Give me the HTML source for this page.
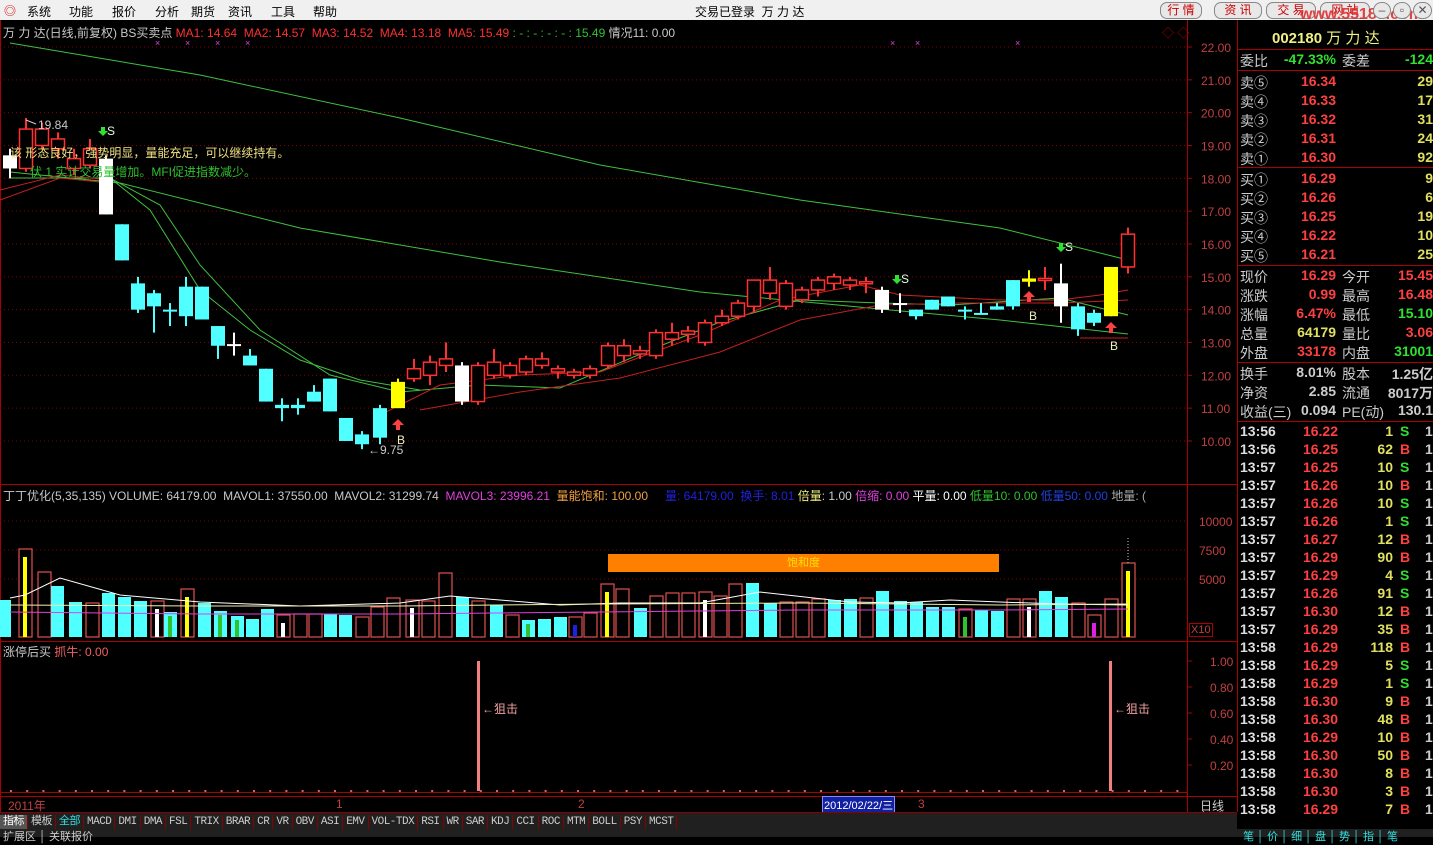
<!DOCTYPE html>
<html><head><meta charset="utf-8">
<style>
*{margin:0;padding:0;box-sizing:border-box}
body{width:1433px;height:837px;background:#000;overflow:hidden;position:relative;font-family:"Liberation Sans","Noto Sans CJK SC",sans-serif;font-size:12px}
.menu{position:absolute;left:0;top:0;width:1433px;height:20px;background:#f0f0f0;color:#000;font-size:12px}
.menu span{position:absolute;top:3px}
.btn{position:absolute;top:2px;height:17px;border:1px solid #888;border-radius:7px;background:#e8e8e8;color:#c00;font-size:12px;text-align:center;line-height:15px}
.t{position:absolute;white-space:nowrap}
.rp{position:absolute;left:1237px;top:20px;width:196px;height:792px;background:#000;font-size:14px;font-weight:bold}
.rp .l{position:absolute;left:3px;color:#c8c8c8;font-weight:normal}
.hl{position:absolute;left:0;width:196px;height:1px;background:#a00}
.tabs{position:absolute;left:0;top:812px;width:1237px;height:17px;background:#202020;border-top:1px solid #800}
.tabs span{display:inline-block;height:16px;line-height:15px;padding:0 3px;border-right:1px solid #800;color:#ccc;font-family:"Liberation Mono","Noto Sans CJK SC",monospace;font-size:11px;letter-spacing:-0.5px}
</style></head><body>
<div class="menu">
<span style="left:4px;top:2px;color:#d02020;font-weight:bold">◎</span>
<span style="left:27px">系统</span><span style="left:69px">功能</span><span style="left:112px">报价</span><span style="left:155px">分析</span><span style="left:191px">期货</span><span style="left:228px">资讯</span><span style="left:271px">工具</span><span style="left:313px">帮助</span>
<span style="left:695px">交易已登录&nbsp; 万 力 达</span>
</div>
<div class="btn" style="left:1160px;width:42px">行 情</div>
<div class="btn" style="left:1214px;width:48px">资 讯</div>
<div class="btn" style="left:1266px;width:50px">交 易</div>
<div class="btn" style="left:1320px;width:50px">网 站</div>
<div class="t" style="left:1300px;top:6px;color:#e03030;font-weight:bold;font-size:16px;opacity:.9">www.55188.com</div>
<div class="btn" style="left:1373px;width:18px;border-radius:9px;color:#555">–</div>
<div class="btn" style="left:1393px;width:18px;border-radius:9px;color:#555">▫</div>
<div class="btn" style="left:1413px;width:19px;border-radius:9px;color:#555">✕</div>

<svg id="ch" width="1237" height="792" style="position:absolute;left:0;top:20px" xmlns="http://www.w3.org/2000/svg"></svg>

<div class="t" style="left:3px;top:24px;color:#c8c8c8">万 力 达(日线,前复权) BS买卖点 <span style="color:#ff3030">MA1: 14.64&nbsp; MA2: 14.57&nbsp; MA3: 14.52&nbsp; MA4: 13.18&nbsp; MA5: 15.49</span> <span style="color:#30c030">: - : - : - : - : 15.49</span> 情况11: 0.00</div>
<div class="t" style="left:1162px;top:24px;color:#a00">◇ ◇</div>
<div class="t" style="left:10px;top:144px;color:#f0e080;font-size:12px">该 形态良好，强势明显，量能充足，可以继续持有。</div>
<div class="t" style="left:30px;top:163px;color:#30c030;font-size:12px">伏 1 实计交易量增加。MFI促进指数减少。</div>
<div class="t" style="left:38px;top:118px;color:#c8c8c8">19.84</div>
<div class="t" style="left:368px;top:443px;color:#c8c8c8">←9.75</div>

<div class="t" style="left:3px;top:487px;color:#c8c8c8">丁丁优化(5,35,135) VOLUME: 64179.00&nbsp; MAVOL1: 37550.00&nbsp; MAVOL2: 31299.74&nbsp; <span style="color:#e040e0">MAVOL3: 23996.21</span>&nbsp; <span style="color:#f0a040">量能饱和: 100.00</span></div>
<div class="t" style="left:665px;top:487px;color:#2020e0">量: 64179.00&nbsp; 换手: 8.01 <span style="color:#f0f080">倍量</span><span style="color:#ccc">: 1.00</span> <span style="color:#e040e0">倍缩: 0.00</span> <span style="color:#fff">平量: 0.00</span> <span style="color:#30c030">低量10: 0.00</span> <span style="color:#2040e0">低量50: 0.00</span> <span style="color:#aaa">地量: (</span></div>
<div class="t" style="left:608px;top:554px;width:391px;height:18px;background:#ff8000;color:#ffe000;text-align:center;line-height:18px;font-size:11px">饱和度</div>
<div class="t" style="left:1189px;top:623px;border:1px solid #a00;color:#c04040;font-size:11px;padding:0 1px">X10</div>
<div class="t" style="left:3px;top:643px;color:#c8c8c8">涨停后买 <span style="color:#f06060">抓牛: 0.00</span></div>
<div class="t" style="left:482px;top:700px;color:#f0a0a0">←狙击</div>
<div class="t" style="left:1114px;top:700px;color:#f0a0a0">←狙击</div>
<div class="t" style="left:8px;top:797px;color:#c04040">2011年</div>
<div class="t" style="left:336px;top:797px;color:#c04040">1</div>
<div class="t" style="left:578px;top:797px;color:#c04040">2</div>
<div class="t" style="left:822px;top:796px;background:#1020a0;color:#fff;border:1px solid #88f;padding:0 1px;font-size:11px">2012/02/22/三</div>
<div class="t" style="left:918px;top:797px;color:#c04040">3</div>
<div class="t" style="left:1200px;top:797px;color:#ccc">日线</div>
<div class="t" style="left:1188px;top:812px;width:49px;height:17px;color:#ccc;font-size:11px;background:#202020">&nbsp;+ │ - │ 0</div>

<div class="tabs"><span style="background:#555;color:#fff">指标</span><span>模板</span><span style="color:#30e0e0">全部</span><span>MACD</span><span>DMI</span><span>DMA</span><span>FSL</span><span>TRIX</span><span>BRAR</span><span>CR</span><span>VR</span><span>OBV</span><span>ASI</span><span>EMV</span><span>VOL-TDX</span><span>RSI</span><span>WR</span><span>SAR</span><span>KDJ</span><span>CCI</span><span>ROC</span><span>MTM</span><span>BOLL</span><span>PSY</span><span>MCST</span></div>
<div class="t" style="left:0;top:829px;width:1237px;height:8px;background:#202020;color:#ccc;font-size:11px;line-height:16px">&nbsp;扩展区 │ 关联报价</div>

<div class="rp" id="rp">
<div class="hl" style="top:0;background:#a00;width:1px;height:792px"></div>
<div class="t" style="left:35px;top:7px;color:#f0f080;font-size:15px">002180 <span style="font-weight:normal">万 力 达</span></div>
<div class="hl" style="top:29px"></div>
<div class="hl" style="top:50px"></div>
<div class="hl" style="top:147px"></div>
<div class="hl" style="top:245px"></div>
<div class="hl" style="top:342px"></div>
<div class="hl" style="top:401px"></div>
</div>
<div class="t" style="left:1237px;top:829px;width:196px;height:8px;background:#202020;color:#30e0e0;font-size:11px;line-height:16px">&nbsp;&nbsp;笔 │ 价 │ 细 │ 盘 │ 势 │ 指 │ 笔</div>

<script>
const S='http://www.w3.org/2000/svg';const svg=document.getElementById('ch');
function el(n,a){const e=document.createElementNS(S,n);for(const k in a)e.setAttribute(k,a[k]);svg.appendChild(e);return e}
function tx(x,y,s,c,fs){const e=el('text',{x:x,y:y,fill:c,'font-size':fs||12,'font-family':'Liberation Sans, Noto Sans CJK SC, sans-serif'});e.textContent=s;return e}
const O=20; // svg offset
function Y(p){return 47+(22-p)*32.83-O}
// frames
el('line',{x1:1187.5,y1:0,x2:1187.5,y2:792,stroke:'#a00'});
el('line',{x1:0,y1:464.5,x2:1237,y2:464.5,stroke:'#a00'});
el('line',{x1:0,y1:621.5,x2:1237,y2:621.5,stroke:'#a00'});
el('line',{x1:0,y1:776.5,x2:1237,y2:776.5,stroke:'#a00'});
el('line',{x1:0.5,y1:0,x2:0.5,y2:792,stroke:'#a00'});
// price grid
for(let p=10;p<=22;p++){const y=Y(p);el('line',{x1:0,y1:y,x2:1187,y2:y,stroke:'#800','stroke-dasharray':'1,3'});
 el('line',{x1:1187,y1:y,x2:1192,y2:y,stroke:'#a00'});tx(1201,y+5,p.toFixed(2),'#c04040',12);}
// MAs
function pl(pts,c){el('polyline',{points:pts.map(p=>p[0]+','+(p[1]-O)).join(' '),fill:'none',stroke:c,'stroke-width':1})}
pl([[10,43],[200,75],[400,118],[600,165],[800,200],[1000,228],[1128,260]],'#40c040');
pl([[10,172],[120,183],[300,228],[500,262],[700,292],[880,309],[1000,320],[1128,334]],'#40c040');
pl([[10,178],[110,178],[160,205],[200,265],[260,330],[330,375],[400,392],[480,385],[560,388],[650,350],[720,322],[800,300],[880,303],[950,305],[1060,298],[1128,315]],'#40c040');
pl([[110,178],[150,210],[200,290],[250,330],[300,360],[360,380],[420,390]],'#40c040');
pl([[0,190],[60,175],[110,180]],'#c02020');pl([[0,200],[60,178],[110,183]],'#c02020');
pl([[380,415],[440,385],[520,375],[600,372],[700,335],[780,300],[860,285],[900,295],[1000,300],[1060,300],[1100,295],[1128,290]],'#d02020');
pl([[420,410],[520,392],[620,378],[720,352],[800,320],[880,305],[960,303],[1060,303],[1128,300]],'#c02020');
pl([[1080,338],[1128,338]],'#c02020');
// candles [x,o,c,h,l,col]
const C=[[10,18.3,18.7,18.9,18.0,'w'],[26,18.3,19.5,19.84,18.2,'r'],[42,19.0,19.5,19.7,18.9,'r'],[58,18.9,19.2,19.4,18.6,'r'],[74,18.3,18.6,18.9,18.1,'r'],[90,18.4,18.9,19.2,18.3,'r'],[106,18.6,16.9,18.7,16.9,'w'],[122,16.6,15.5,16.6,15.5,'c'],[138,14.8,14.0,15.0,13.9,'c'],[154,14.5,14.1,14.6,13.3,'c'],[170,14.0,13.95,14.2,13.5,'c'],[186,14.7,13.8,15.0,13.5,'c'],[202,14.7,13.7,14.7,13.7,'c'],[218,13.5,12.9,13.5,12.5,'c'],[234,12.95,12.9,13.3,12.6,'w'],[250,12.6,12.3,12.8,12.3,'c'],[266,12.2,11.2,12.2,11.2,'c'],[282,11.1,11.0,11.3,10.6,'c'],[298,11.1,11.0,11.3,10.8,'c'],[314,11.5,11.2,11.7,11.2,'c'],[330,11.9,10.9,11.9,10.9,'c'],[346,10.7,10.0,10.7,10.0,'c'],[362,10.2,9.9,10.3,9.75,'c'],[380,10.1,11.0,11.1,9.9,'c'],[398,11.0,11.8,11.9,11.0,'y'],[414,11.9,12.2,12.5,11.8,'r'],[430,12.0,12.4,12.6,11.7,'r'],[446,12.3,12.5,13.0,12.1,'r'],[462,12.3,11.2,12.4,11.1,'w'],[478,11.2,12.3,12.4,11.1,'r'],[494,12.0,12.4,12.8,11.9,'r'],[510,12.0,12.3,12.4,11.9,'r'],[526,12.1,12.5,12.6,12.0,'r'],[542,12.3,12.5,12.7,12.2,'r'],[558,12.1,12.2,12.3,11.9,'r'],[574,12.0,12.1,12.2,11.9,'r'],[590,12.0,12.2,12.3,11.9,'r'],[608,12.3,12.9,13.0,12.2,'r'],[624,12.6,12.9,13.1,12.4,'r'],[640,12.65,12.75,12.9,12.5,'r'],[656,12.6,13.3,13.4,12.5,'r'],[672,13.1,13.3,13.6,12.9,'r'],[688,13.25,13.35,13.5,13.0,'r'],[705,13.0,13.6,13.7,12.9,'r'],[722,13.6,13.8,14.0,13.5,'r'],[738,13.8,14.2,14.3,13.7,'r'],[754,14.1,14.9,14.9,13.9,'r'],[770,14.5,14.9,15.3,14.3,'r'],[786,14.1,14.8,14.9,14.0,'r'],[802,14.3,14.6,14.7,14.2,'r'],[818,14.6,14.9,15.0,14.4,'r'],[834,14.8,15.0,15.1,14.6,'r'],[850,14.75,14.9,15.0,14.6,'r'],[866,14.8,14.85,15.0,14.5,'r'],[882,14.6,14.0,14.7,13.9,'w'],[900,14.2,14.15,14.5,13.9,'w'],[916,14.0,13.8,14.0,13.7,'c'],[932,14.3,14.0,14.3,14.0,'c'],[948,14.4,14.1,14.4,14.1,'c'],[965,14.0,13.95,14.1,13.7,'c'],[981,13.9,13.85,14.2,13.85,'c'],[997,14.0,14.1,14.2,14.0,'c'],[1013,14.9,14.1,14.9,14.0,'c'],[1029,14.95,14.85,15.2,14.7,'y'],[1045,14.95,14.9,15.3,14.6,'r'],[1061,14.8,14.1,15.4,13.6,'w'],[1078,14.1,13.4,14.2,13.2,'c'],[1094,13.9,13.6,14.0,13.5,'c'],[1111,15.3,13.8,15.3,13.8,'y'],[1128,15.3,16.3,16.5,15.1,'r']];
const col={r:'#ff3030',c:'#50ffff',w:'#ffffff',y:'#ffff00'};
C.forEach(d=>{const [x,o,c,h,l,k]=d;const top=Y(Math.max(o,c)),bot=Y(Math.min(o,c));const cl=col[k];
 el('line',{x1:x,y1:Y(h),x2:x,y2:Y(l),stroke:cl,'stroke-width':2});
 const hgt=Math.max(bot-top,2);
 if(k==='r')el('rect',{x:x-6.5,y:top,width:13,height:hgt,fill:'#000',stroke:cl,'stroke-width':1.5});
 else el('rect',{x:x-7,y:top,width:14,height:hgt,fill:cl});});
// arrows & signals
[[398,425],[1029,297],[1111,328]].forEach(a=>{el('path',{d:`M${a[0]} ${a[1]-O-6}l-6 6h4v5h4v-5h4z`,fill:'#ff4040'})});
tx(397,444-O,'B','#f0f0c0');tx(1029,320-O,'B','#f0f0c0');tx(1110,350-O,'B','#f0f0c0');
[[103,130],[897,278],[1061,246]].forEach(a=>{el('path',{d:`M${a[0]} ${a[1]-O+6}l-5-5h3v-4h4v4h3z`,fill:'#30e030'});tx(a[0]+4,a[1]-O+5,'S','#e0ffe0')});
el('polyline',{points:`26,${120-O} 36,${124-O}`,stroke:'#ccc',fill:'none'});
[155,185,215,245,890,915,1015].forEach(x=>tx(x,46-O,'×','#e040e0',9));
// volume panel
[[10000,521],[7500,550],[5000,579]].forEach(v=>{el('line',{x1:0,y1:v[1]-O,x2:1187,y2:v[1]-O,stroke:'#800','stroke-dasharray':'1,3'});tx(1199,v[1]-O+5,v[0],'#c04040',12)});
const VB=637-O;
const V=[[4,600,'c'],[25,549,'ry'],[44,572,'r'],[57,586,'c'],[75,602,'c'],[92,603,'r'],[108,593,'c'],[124,597,'c'],[140,601,'c'],[157,601,'rw'],[170,612,'cg'],[187,589,'ry'],[204,603,'c'],[220,611,'cg'],[237,616,'cg'],[252,619,'c'],[267,609,'c'],[283,615,'rw'],[300,614,'r'],[315,614,'r'],[330,614,'c'],[345,615,'c'],[362,617,'r'],[377,607,'r'],[393,598,'r'],[412,600,'rw'],[428,601,'r'],[445,573,'r'],[462,597,'c'],[478,601,'r'],[496,605,'c'],[512,615,'r'],[528,620,'cg'],[544,619,'c'],[560,617,'c'],[575,617,'rb'],[590,613,'r'],[607,584,'ry'],[622,589,'r'],[640,608,'c'],[656,596,'r'],[672,593,'r'],[688,593,'r'],[705,592,'rw'],[720,596,'r'],[735,584,'r'],[752,583,'c'],[770,603,'c'],[786,602,'r'],[802,602,'r'],[818,599,'r'],[834,600,'c'],[850,599,'c'],[866,598,'r'],[882,591,'c'],[900,601,'c'],[916,602,'c'],[932,607,'c'],[948,607,'c'],[965,609,'rg'],[981,610,'c'],[997,611,'c'],[1013,599,'r'],[1029,599,'rw'],[1045,591,'c'],[1061,597,'c'],[1078,603,'r'],[1094,615,'rm'],[1111,599,'r'],[1128,563,'ry']];
V.forEach(v=>{const [x,t,k]=v;const y=t-O;
 if(k[0]==='c')el('rect',{x:x-6,y:y,width:13,height:VB-y,fill:'#50ffff'});
 else el('rect',{x:x-6,y:y,width:13,height:VB-y,fill:'#000',stroke:'#e05050','stroke-width':1.2});
 const inner={y:'#ffff00',w:'#ffffff',g:'#30c030',b:'#2020e0',m:'#e020e0'}[k[1]];
 if(inner)el('rect',{x:x-2,y:y+(k[0]==='r'?8:4),width:4,height:VB-y-(k[0]==='r'?8:4),fill:inner});});
pl([[10,598],[25,595],[60,578],[120,595],[200,602],[300,606],[400,603],[450,596],[500,600],[560,605],[620,603],[700,603],[760,592],[850,602],[900,603],[950,600],[1000,602],[1060,604],[1128,605]],'#ffffff');
pl([[10,605],[200,606],[400,606],[600,604],[800,603],[1000,605],[1128,604]],'#f0f0b0');
pl([[10,612],[200,614],[400,614],[600,612],[800,610],[1000,610],[1128,609]],'#e040e0');
el('line',{x1:1128,y1:538-O,x2:1128,y2:563-O,stroke:'#ccc','stroke-dasharray':'1,2'});
// bottom panel
[[1.00,661],[0.80,687],[0.60,713],[0.40,739],[0.20,765]].forEach(v=>{tx(1210,v[1]-O+5,v[0].toFixed(2),'#c04040',12);el('line',{x1:1187,y1:v[1]-O,x2:1192,y2:v[1]-O,stroke:'#a00'})});
el('rect',{x:477,y:661-O,width:3,height:130,fill:'#f08080'});
el('rect',{x:1109,y:661-O,width:3,height:130,fill:'#f08080'});
for(let x=10;x<1187;x+=16.2)el('rect',{x:x,y:790-O,width:2,height:2,fill:'#e06060'});
el('line',{x1:0,y1:792.5-O,x2:1187,y2:792.5-O,stroke:'#a00'});
// right panel
const rp=document.getElementById('rp');
function rt(x,y,s,c,al,w){const d=document.createElement('div');d.className='t';d.style.cssText=`top:${y-20}px;color:${c};`+(al==='r'?`right:${196-x}px;`:`left:${x}px;`)+(w?'font-weight:normal;':'');d.textContent=s;rp.appendChild(d)}
rt(3,51,'委比','#ccc','l',1);rt(99,51,'-47.33%','#30e030','r');rt(105,51,'委差','#ccc','l',1);rt(196,51,'-124','#30e030','r');
const sells=[['卖⑤','16.34','29'],['卖④','16.33','17'],['卖③','16.32','31'],['卖②','16.31','24'],['卖①','16.30','92']];
sells.forEach((s,i)=>{const y=73+i*19;rt(3,y,s[0],'#ccc','l',1);rt(99,y,s[1],'#ff4040','r');rt(196,y,s[2],'#e0e060','r')});
const buys=[['买①','16.29','9'],['买②','16.26','6'],['买③','16.25','19'],['买④','16.22','10'],['买⑤','16.21','25']];
buys.forEach((s,i)=>{const y=170+i*19;rt(3,y,s[0],'#ccc','l',1);rt(99,y,s[1],'#ff4040','r');rt(196,y,s[2],'#e0e060','r')});
const st=[['现价','16.29','#ff4040','今开','15.45','#ff4040'],['涨跌','0.99','#ff4040','最高','16.48','#ff4040'],['涨幅','6.47%','#ff4040','最低','15.10','#30e030'],['总量','64179','#e0e060','量比','3.06','#ff4040'],['外盘','33178','#ff4040','内盘','31001','#30e030']];
st.forEach((s,i)=>{const y=267+i*19;rt(3,y,s[0],'#ccc','l',1);rt(99,y,s[1],s[2],'r');rt(105,y,s[3],'#ccc','l',1);rt(196,y,s[4],s[5],'r')});
const st2=[['换手','8.01%','股本','1.25亿'],['净资','2.85','流通','8017万'],['收益(三)','0.094','PE(动)','130.1']];
st2.forEach((s,i)=>{const y=364+i*19;rt(3,y,s[0],'#ccc','l',1);rt(99,y,s[1],'#ccc','r');rt(105,y,s[2],'#ccc','l',1);rt(196,y,s[3],'#ccc','r')});
const tk=[['13:56','16.22','1','S'],['13:56','16.25','62','B'],['13:57','16.25','10','S'],['13:57','16.26','10','B'],['13:57','16.26','10','S'],['13:57','16.26','1','S'],['13:57','16.27','12','B'],['13:57','16.29','90','B'],['13:57','16.29','4','S'],['13:57','16.26','91','S'],['13:57','16.30','12','B'],['13:57','16.29','35','B'],['13:58','16.29','118','B'],['13:58','16.29','5','S'],['13:58','16.29','1','S'],['13:58','16.30','9','B'],['13:58','16.30','48','B'],['13:58','16.29','10','B'],['13:58','16.30','50','B'],['13:58','16.30','8','B'],['13:58','16.30','3','B'],['13:58','16.29','7','B']];
tk.forEach((s,i)=>{const y=423+i*18;rt(3,y,s[0],'#ddd','l');rt(101,y,s[1],'#ff4040','r');rt(156,y,s[2],'#e0e060','r');rt(163,y,s[3],s[3]==='S'?'#30e030':'#ff4040','l');rt(188,y,'1','#ccc','l')});
</script>
</body></html>
